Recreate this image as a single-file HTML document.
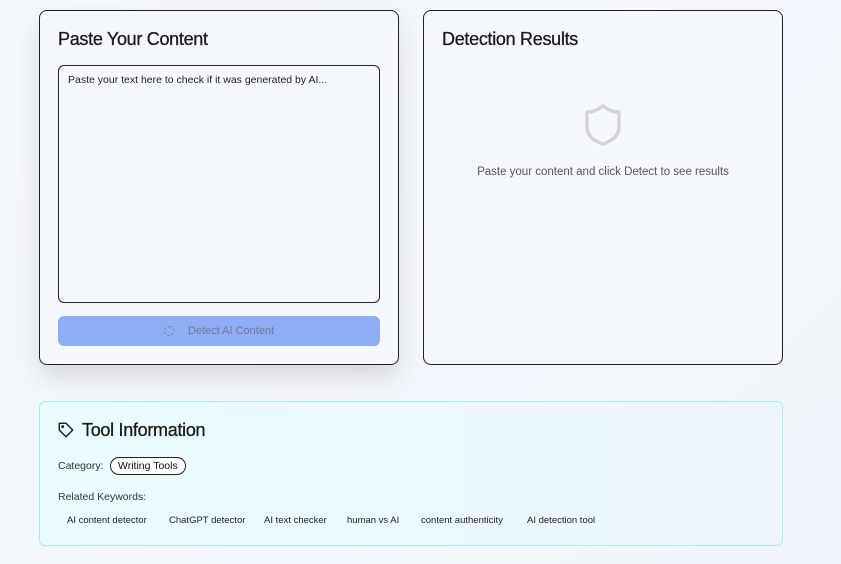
<!DOCTYPE html>
<html><head><style>
body{margin:0;width:841px;height:564px;background:linear-gradient(135deg,#f5f8fc,#f2f5fb);font-family:"Liberation Sans",sans-serif;position:relative;overflow:hidden;color:#111}
.card{position:absolute;box-sizing:border-box;border:1px solid #222;border-radius:8px;background:#f5f8fc}
h2{margin:0;position:absolute;font-size:18px;font-weight:normal;letter-spacing:-0.3px;color:#1a1a1a;-webkit-text-stroke:0.3px #1a1a1a}
.ta{position:absolute;left:18px;top:54px;width:322px;height:238px;box-sizing:border-box;border:1px solid #222;border-radius:6px;font-size:10.5px;padding:8px 9px;color:#222}
.btn{position:absolute;left:18px;top:305px;width:322px;height:30px;background:#8eadf4;border-radius:6px;color:#6b7a99;font-size:11px;text-align:center;line-height:30px}
.kw{position:absolute;top:515px;font-size:9.5px;color:#222}
</style></head><body>
<div class="card" style="left:39px;top:10px;width:360px;height:355px;box-shadow:0 12px 24px rgba(0,0,0,0.12)">
<h2 style="left:18px;top:18px">Paste Your Content</h2>
<div class="ta">Paste your text here to check if it was generated by AI...</div>
<div class="btn"><span style="display:inline-block;width:8px;height:8px;border:1px dashed #7a88a8;border-radius:50%;vertical-align:middle;margin-right:14px"></span>Detect AI Content</div>
</div>
<div class="card" style="left:423px;top:10px;width:360px;height:355px">
<h2 style="left:18px;top:18px">Detection Results</h2>
<svg style="position:absolute;left:160px;top:92px" width="38" height="44" viewBox="0 0 38 44"><path d="M19 3 C14 7 9 9 3 9 V24 C3 33 10 38 19 41 C28 38 35 33 35 24 V9 C29 9 24 7 19 3Z" fill="none" stroke="#d2d4d8" stroke-width="3.5" stroke-linejoin="round"/></svg>
<div style="position:absolute;left:0;width:358px;top:155px;text-align:center;font-size:11.5px;color:#555">Paste your content and click Detect to see results</div>
</div>
<div style="position:absolute;left:39px;top:401px;width:744px;height:145px;box-sizing:border-box;border:1px solid #a8eef8;border-radius:6px;background:linear-gradient(90deg,#eafcfe,#eef6fd)">
<svg style="position:absolute;left:17px;top:19px" width="18" height="18" viewBox="0 0 24 24" fill="none" stroke="#222" stroke-width="2" stroke-linejoin="round"><path d="M3 3h9l9 9-9 9-9-9z"/><circle cx="7.5" cy="7.5" r="1" fill="#222"/></svg>
<h2 style="left:42px;top:18px">Tool Information</h2>
<div style="position:absolute;left:18px;top:58px;font-size:10.5px;color:#333">Category:</div>
<div style="position:absolute;left:70px;top:55px;border:1px solid #222;border-radius:10px;padding:2px 7px;font-size:10.5px;background:#fff">Writing Tools</div>
<div style="position:absolute;left:18px;top:89px;font-size:10.5px;color:#333">Related Keywords:</div>
</div>
<div class="kw" style="left:67px">AI content detector</div>
<div class="kw" style="left:169px">ChatGPT detector</div>
<div class="kw" style="left:264px">AI text checker</div>
<div class="kw" style="left:347px">human vs AI</div>
<div class="kw" style="left:421px">content authenticity</div>
<div class="kw" style="left:527px">AI detection tool</div>
</body></html>
